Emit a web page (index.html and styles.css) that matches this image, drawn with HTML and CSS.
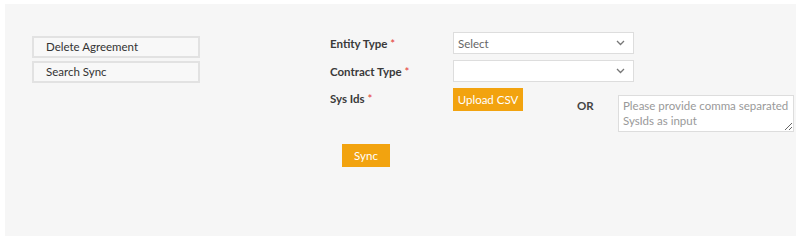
FILE: index.html
```html
<!DOCTYPE html>
<html lang="en">
<head>
    <meta charset="UTF-8">
    <meta name="viewport" content="width=device-width, initial-scale=1.0">
    <title>Sync Agreements</title>
    <link rel="stylesheet" href="styles.css">
</head>
<body>

<div class="panel">
    <div class="side-menu">
        <div class="menu-item">Delete Agreement</div>
        <div class="menu-item">Search Sync</div>
    </div>

    <div class="sync-form">
        <div class="form-row">
            <label class="form-label">Entity Type <span class="required">*</span></label>
            <div class="select-box">
                <span class="select-text">Select</span>
                <svg class="chevron" width="9" height="6" viewBox="0 0 9 6"><path d="M1 1l3.5 3.5L8 1" fill="none" stroke="#777" stroke-width="1.3"/></svg>
            </div>
        </div>
        <div class="form-row">
            <label class="form-label">Contract Type <span class="required">*</span></label>
            <div class="select-box">
                <span class="select-text"></span>
                <svg class="chevron" width="9" height="6" viewBox="0 0 9 6"><path d="M1 1l3.5 3.5L8 1" fill="none" stroke="#777" stroke-width="1.3"/></svg>
            </div>
        </div>
        <div class="form-row sys-row">
            <label class="form-label">Sys Ids <span class="required">*</span></label>
            <button class="btn upload-btn">Upload CSV</button>
            <span class="or-text">OR</span>
            <textarea class="sys-input" placeholder="Please provide comma separated SysIds as input"></textarea>
        </div>
        <button class="btn sync-btn">Sync</button>
    </div>
</div>

</body>
</html>
```

FILE: styles.css
```css
body {
    margin: 0;
    background-color: #fff;
    font-family: "Lato", "Open Sans", sans-serif;
    font-size: 11.5px;
    color: #333;
}

/* Grey content panel */
.panel {
    display: flex;
    align-items: flex-start;
    margin: 4px 4px 0 5px;
    height: 232px;
    background-color: #f6f6f6;
    box-sizing: border-box;
    padding-top: 28px;
}

/* Left side menu */
.side-menu {
    width: 168px;
    margin-left: 27px;
    margin-top: 4px;
    display: flex;
    flex-direction: column;
    gap: 3px;
}

.menu-item {
    height: 22px;
    box-sizing: border-box;
    border: 2px solid #e2e2e2;
    background-color: #f8f8f8;
    padding-left: 12px;
    line-height: 18px;
    color: #333;
}

/* Form */
.sync-form {
    margin-left: 130px;
    display: flex;
    flex-direction: column;
    align-items: flex-start;
}

.form-row {
    display: flex;
    align-items: center;
    margin-bottom: 6px;
}

.form-label {
    width: 123px;
    font-weight: 700;
    color: #3a3a3a;
}

.required {
    color: #e53935;
    font-weight: 400;
}

.select-box {
    width: 181px;
    height: 22px;
    box-sizing: border-box;
    border: 1px solid #ddd;
    background-color: #fff;
    display: flex;
    align-items: center;
    justify-content: space-between;
    padding: 0 8px 0 4px;
    color: #666;
}

.btn {
    border: none;
    background-color: #f2a30f;
    color: #fff;
    font-family: inherit;
    font-size: 11.5px;
    padding: 0;
    cursor: pointer;
}

.sys-row {
    align-items: flex-start;
}

.sys-row .form-label {
    line-height: 22px;
}

.upload-btn {
    width: 70px;
    height: 23px;
}

.or-text {
    margin-left: 54px;
    margin-top: 11px;
    width: 41px;
    font-weight: 700;
    color: #444;
}

.sys-input {
    margin-top: 7px;
    width: 176px;
    height: 37px;
    box-sizing: border-box;
    border: 1px solid #ddd;
    padding: 2px 4px;
    font-family: inherit;
    font-size: 11.5px;
    line-height: 15px;
    resize: both;
}

.sys-input::placeholder {
    color: #999;
}

.sync-btn {
    width: 48px;
    height: 23px;
    margin-left: 12px;
    margin-top: 6px;
}
```
